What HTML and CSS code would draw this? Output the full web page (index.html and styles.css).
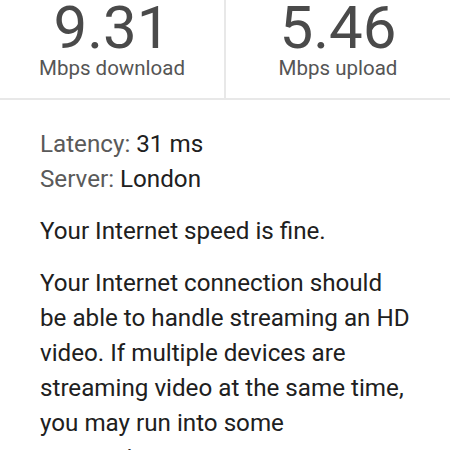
FILE: index.html
```html
<!DOCTYPE html>
<html lang="en">
<head>
    <meta charset="UTF-8">
    <meta name="viewport" content="width=device-width, initial-scale=1.0">
    <title>Speed test result</title>
    <link rel="stylesheet" href="styles.css">
</head>
<body>
    <div class="stats">
        <div class="stat">
            <div class="value">9.31</div>
            <div class="unit">Mbps download</div>
        </div>
        <div class="stat">
            <div class="value">5.46</div>
            <div class="unit">Mbps upload</div>
        </div>
    </div>

    <div class="details">
        <div class="info">
            <div><span class="key">Latency:</span> 31 ms</div>
            <div><span class="key">Server:</span> London</div>
        </div>

        <p>Your Internet speed is fine.</p>

        <p>Your Internet connection should be able to handle streaming an HD video. If multiple devices are streaming video at the same time, you may run into some congestion.</p>
    </div>
</body>
</html>
```

FILE: styles.css
```css
body {
    font-family: Roboto, "Noto Sans", sans-serif;
    background-color: #fff;
    color: #202020;
    margin: 0;
    padding: 0;
    overflow: hidden;
}
.stats {
    display: flex;
    height: 98px;
    border-bottom: 2px solid #e8e8e8;
}
.stat {
    flex: 1;
    text-align: center;
}
.stat:first-child {
    border-right: 2px solid #e8e8e8;
}
.value {
    font-size: 60px;
    line-height: 55px;
    color: #4a4a4a;
}
.unit {
    font-size: 20.5px;
    line-height: 26px;
    color: #555;
}
.details {
    padding: 27px 40px 0;
    font-size: 24.2px;
    line-height: 35px;
}
.key {
    color: #5a5a5a;
}
.details p {
    margin: 17px 0 0;
}
```
